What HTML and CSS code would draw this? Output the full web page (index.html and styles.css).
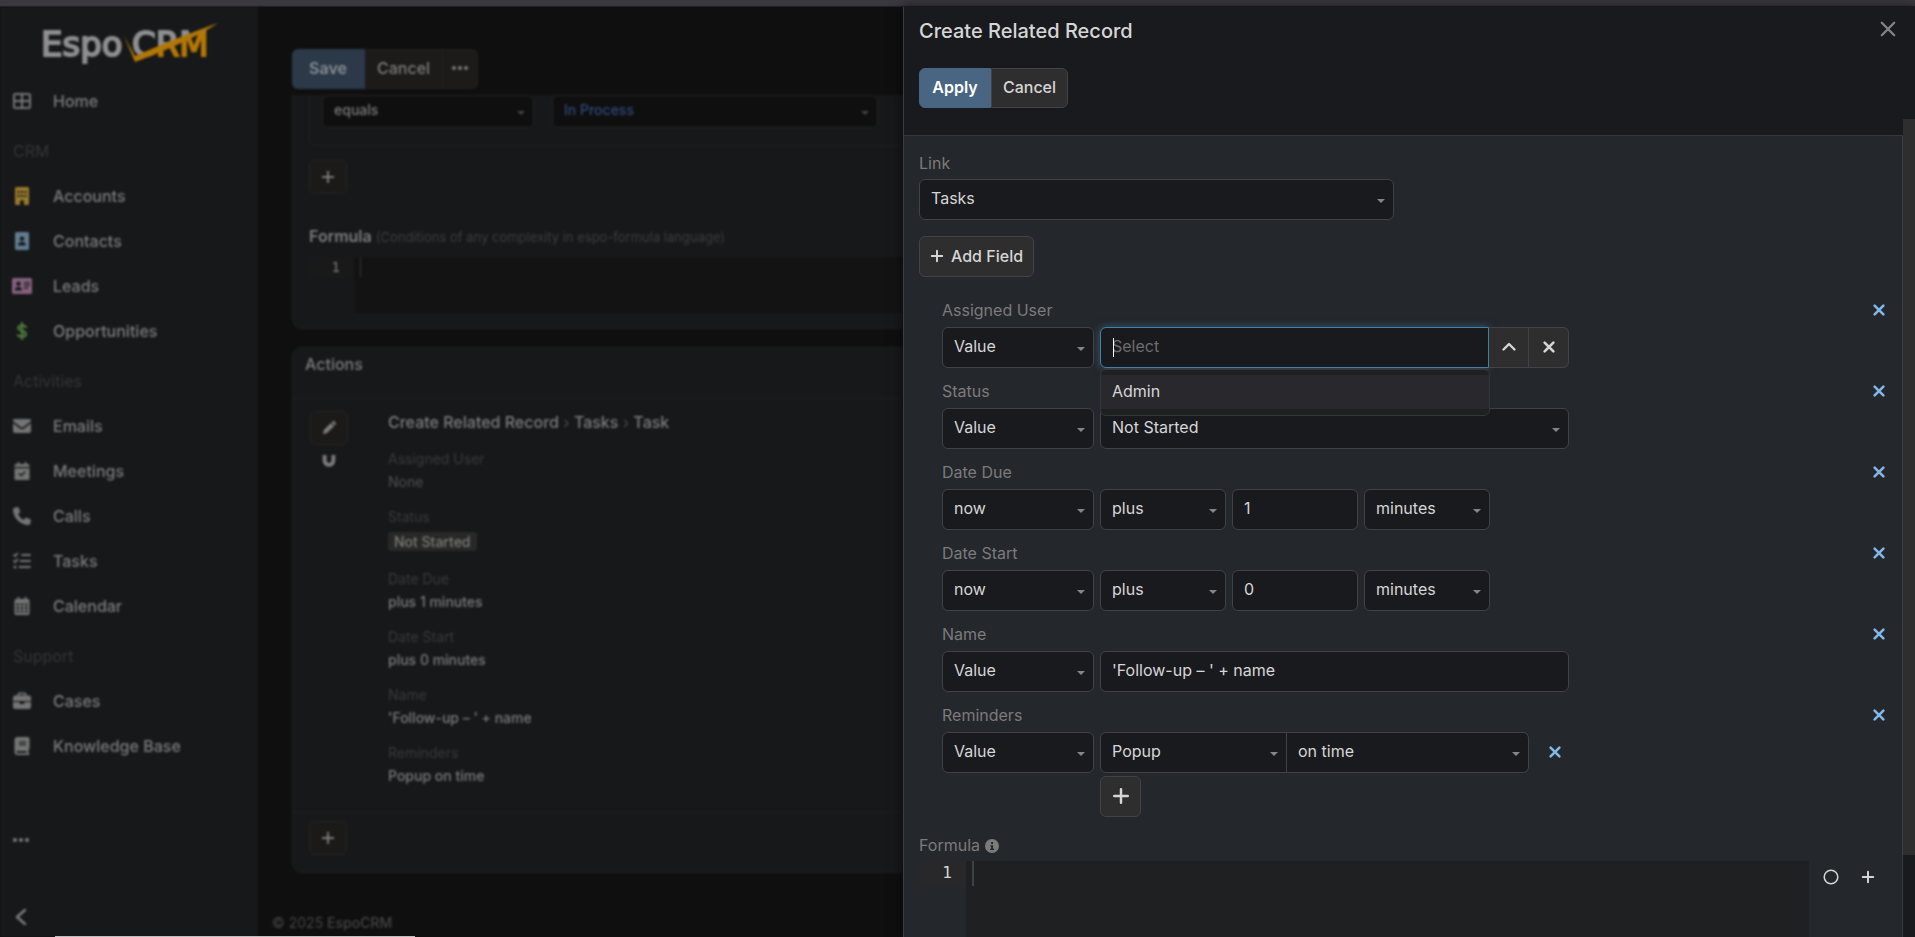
FILE: index.html
```html
<!DOCTYPE html>
<html lang="en">
<head>
<meta charset="utf-8">
<title>EspoCRM</title>
<link rel="stylesheet" href="styles.css">
</head>
<body>
<svg class="sprite" aria-hidden="true">
  <symbol id="plus" viewBox="0 0 16 16"><path d="M8 2v12M2 8h12" fill="none" stroke="currentColor" stroke-width="2.2" stroke-linecap="round"/></symbol>
  <symbol id="close" viewBox="0 0 16 16"><path d="M2.500 2.500l11 11M13.500 2.500l-11 11" fill="none" stroke="currentColor" stroke-width="2" stroke-linecap="round"/></symbol>
  <symbol id="times" viewBox="0 0 16 16"><path d="M3 3l10 10M13 3L3 13" fill="none" stroke="currentColor" stroke-width="3" stroke-linecap="round"/></symbol>
  <symbol id="up" viewBox="0 0 16 16"><path d="M2.500 10.500L8 5l5.500 5.500" fill="none" stroke="currentColor" stroke-width="2.4" stroke-linecap="round" stroke-linejoin="round"/></symbol>
  <symbol id="dots" viewBox="0 0 16 16"><circle cx="2" cy="8" r="2"/><circle cx="8" cy="8" r="2"/><circle cx="14" cy="8" r="2"/></symbol>
  <symbol id="home" viewBox="0 0 18 18"><path d="M2.5 2h13A1.5 1.5 0 0 1 17 3.500v11a1.500 1.500 0 0 1-1.500 1.500h-13A1.500 1.500 0 0 1 1 14.500v-11A1.500 1.500 0 0 1 2.500 2zM9 2v14M1 9h16" fill="none" stroke="currentColor" stroke-width="2"/></symbol>
  <symbol id="building" viewBox="0 0 18 18"><path fill-rule="evenodd" d="M3.500 0h11A1.500 1.500 0 0 1 16 1.500v15a1.500 1.500 0 0 1-1.500 1.500H11v-3a2 2 0 0 0-4 0v3H3.500A1.500 1.500 0 0 1 2 16.500v-15A1.500 1.500 0 0 1 3.500 0zM4.500 4v2h2V4zM8 4v2h2V4zM11.500 4v2h2V4zM4.500 8v2h2V8zM8 8v2h2V8zM11.500 8v2h2V8z"/></symbol>
  <symbol id="contact" viewBox="0 0 18 18"><path fill-rule="evenodd" d="M3.500 0h11A1.500 1.500 0 0 1 16 1.500v15a1.500 1.500 0 0 1-1.500 1.500h-11A1.500 1.500 0 0 1 2 16.500v-15A1.500 1.500 0 0 1 3.500 0zM9 4.500a2.200 2.200 0 1 0 0 4.400 2.200 2.200 0 0 0 0-4.400zM5 13.500h8c0-2-1.500-3.500-3-3.500H8c-1.500 0-3 1.500-3 3.500z"/></symbol>
  <symbol id="lead" viewBox="0 0 20 18"><path fill-rule="evenodd" d="M1.500 1h17A1.500 1.500 0 0 1 20 2.500v13a1.500 1.500 0 0 1-1.500 1.500h-17A1.500 1.500 0 0 1 0 15.500v-13A1.500 1.500 0 0 1 1.500 1zM6.500 4.500a2.200 2.200 0 1 0 0 4.400 2.200 2.200 0 0 0 0-4.400zM3 13.500h7c0-2-1-3.500-2.500-3.500h-2C4 10 3 11.500 3 13.500zM12 5v1.200h6V5zM12 7.800V9h6V7.800zM12 10.600v1.200h4v-1.200z"/></symbol>
  <symbol id="dollar" viewBox="0 0 18 18"><path d="M9 1v16M13 5C12 3.700 6 2.500 5.300 5.700 4.700 9.500 13 8 13 12c0 3.500-6 3-8.200 1.300" fill="none" stroke="currentColor" stroke-width="2.200" stroke-linecap="round"/></symbol>
  <symbol id="mail" viewBox="0 0 18 18"><path d="M1.500 2h15A1.500 1.500 0 0 1 17.400 4.700L9.900 10.300a1.500 1.500 0 0 1-1.800 0L.6 4.700A1.500 1.500 0 0 1 1.500 2zM0 6.200l7.300 5.500a3 3 0 0 0 3.400 0L18 6.200V14a2 2 0 0 1-2 2H2a2 2 0 0 1-2-2z"/></symbol>
  <symbol id="meeting" viewBox="0 0 18 18"><path d="M4.500 0h2v2h5V0h2v2H15a1.500 1.500 0 0 1 1.500 1.500V5h-15V3.500A1.500 1.500 0 0 1 3 2h1.500zM1.500 6.200h15v10A1.500 1.500 0 0 1 15 18H3a1.500 1.500 0 0 1-1.500-1.800z"/><path d="M6 11.500l2.200 2.200 4-4" fill="none" stroke="#17181a" stroke-width="1.500"/></symbol>
  <symbol id="call" viewBox="0 0 18 18"><path d="M5.800.9A1.400 1.400 0 0 0 4.100.1L1 .9A1.400 1.400 0 0 0 0 2.300C0 11 7 18 15.700 18c.6 0 1.200-.4 1.400-1l.8-3.100a1.400 1.400 0 0 0-.8-1.700l-3.400-1.400c-.6-.2-1.200-.1-1.600.4l-1.400 1.700A11.900 11.900 0 0 1 5 7.200l1.700-1.400c.5-.4.6-1 .4-1.600z"/></symbol>
  <symbol id="tasks" viewBox="0 0 18 18"><path d="M9 3h8M7.500 9H17M6.500 15H17M1 3l1.200 1.200L4.500 1.500M1 9l1.200 1.200L4.500 7.500" fill="none" stroke="currentColor" stroke-width="1.800" stroke-linecap="round"/><circle cx="2" cy="15" r="1.600"/></symbol>
  <symbol id="calendar" viewBox="0 0 18 18"><path fill-rule="evenodd" d="M4.500 0h2v2h5V0h2v2H15a1.500 1.500 0 0 1 1.500 1.500v13A1.500 1.500 0 0 1 15 18H3a1.500 1.500 0 0 1-1.500-1.500v-13A1.500 1.500 0 0 1 3 2h1.500zM3.500 6.500v2h2.500v-2zM7.700 6.500v2h2.600v-2zM12 6.500v2h2.500v-2zM3.500 10v2h2.500v-2zM7.700 10v2h2.600v-2zM12 10v2h2.500v-2zM3.500 13.500v2h2.500v-2zM7.700 13.500v2h2.600v-2zM12 13.500v2h2.500v-2z"/></symbol>
  <symbol id="case" viewBox="0 0 18 18"><path fill-rule="evenodd" d="M6 .5h6A1.500 1.500 0 0 1 13.500 2v1.500H16a2 2 0 0 1 2 2V9H0V5.500a2 2 0 0 1 2-2h2.500V2A1.500 1.500 0 0 1 6 .5zM6.200 2.200v1.300h5.600V2.200zM0 10h6.500v1a1 1 0 0 0 1 1h3a1 1 0 0 0 1-1v-1H18v5a2 2 0 0 1-2 2H2a2 2 0 0 1-2-2z"/></symbol>
  <symbol id="book" viewBox="0 0 18 18"><path fill-rule="evenodd" d="M4.500 0H15a1.500 1.500 0 0 1 1.500 1.500v10.200c0 .6-.4 1.100-1 1.300V16a1 1 0 0 1 0 2h-11a3 3 0 0 1-3-3V3a3 3 0 0 1 3-3zM6 4.500v1.200h7V4.500zM6 7v1.200h7V7zM4.500 14a1 1 0 0 0 0 2h9v-2z"/></symbol>
  <symbol id="pencil" viewBox="0 0 16 16"><path d="M10.200 2.200l3.600 3.600-8 8L1 15l1.200-4.800zM11 1.400l1-1c.6-.6 1.500-.6 2 0L15.600 2c.6.600.6 1.500 0 2l-1 1z"/></symbol>
  <symbol id="magnet" viewBox="0 0 16 16"><path d="M3 1v6.500a5 5 0 0 0 10 0V1" fill="none" stroke="currentColor" stroke-width="4.400"/></symbol>
  <symbol id="back" viewBox="0 0 16 16"><path d="M12 1L4 8l8 7" fill="none" stroke="currentColor" stroke-width="2.400" stroke-linecap="round" stroke-linejoin="round"/></symbol>
  <symbol id="info" viewBox="0 0 16 16"><path fill-rule="evenodd" d="M8 0a8 8 0 1 1 0 16A8 8 0 0 1 8 0zM7 3.500v2.200h2.200V3.500zM6 7v1.500h1V11H5.800v1.500h4.600V11H9.200V7z"/></symbol>
  <symbol id="circle" viewBox="0 0 16 16"><circle cx="8" cy="8" r="6.800" fill="none" stroke="currentColor" stroke-width="1.500"/></symbol>
</svg>

<div class="strip"></div>
<div class="app">
  <nav class="sidebar">
    <a class="logo" href="#" aria-label="EspoCRM">
      <svg viewBox="0 0 180 44" width="180" height="44">
        <defs><linearGradient id="half" gradientUnits="userSpaceOnUse" x1="119" y1="-16" x2="146" y2="60"><stop offset=".5" stop-color="#8f8f8f"/><stop offset=".5" stop-color="#b27706"/></linearGradient></defs>
        <text class="logo-text" x="0" y="35" fill="#8f8f8f" stroke="#8f8f8f">Espo</text>
        <text class="logo-text" x="91" y="35" fill="url(#half)" stroke="url(#half)">CRM</text>
        <path d="M83 15l11 20Q140 15 177 2 150 20 94 41z" fill="#b27706"/>
      </svg>
    </a>
    <ul class="menu">
      <li><a href="#"><svg class="ic"><use href="#home"/></svg>Home</a></li>
      <li class="group">CRM</li>
      <li><a href="#"><svg class="ic gold"><use href="#building"/></svg>Accounts</a></li>
      <li><a href="#"><svg class="ic blue"><use href="#contact"/></svg>Contacts</a></li>
      <li><a href="#"><svg class="ic pink"><use href="#lead"/></svg>Leads</a></li>
      <li><a href="#"><svg class="ic green"><use href="#dollar"/></svg>Opportunities</a></li>
      <li class="group">Activities</li>
      <li><a href="#"><svg class="ic"><use href="#mail"/></svg>Emails</a></li>
      <li><a href="#"><svg class="ic"><use href="#meeting"/></svg>Meetings</a></li>
      <li><a href="#"><svg class="ic"><use href="#call"/></svg>Calls</a></li>
      <li><a href="#"><svg class="ic"><use href="#tasks"/></svg>Tasks</a></li>
      <li><a href="#"><svg class="ic"><use href="#calendar"/></svg>Calendar</a></li>
      <li class="group">Support</li>
      <li><a href="#"><svg class="ic"><use href="#case"/></svg>Cases</a></li>
      <li><a href="#"><svg class="ic"><use href="#book"/></svg>Knowledge Base</a></li>
    </ul>
    <button class="bare more" aria-label="More"><svg class="i16"><use href="#dots"/></svg></button>
    <button class="bare fold" aria-label="Collapse"><svg class="i16"><use href="#back"/></svg></button>
  </nav>
  <main class="main">
    <div class="toolbar">
      <button class="save">Save</button><button>Cancel</button><button class="tight" aria-label="Menu"><svg class="i16"><use href="#dots"/></svg></button>
    </div>
    <section class="panel conditions">
      <div class="cond-box">
        <span class="pick small operator"><select aria-label="Operator"><option>equals</option></select></span>
        <span class="pick small state"><select aria-label="Status value"><option>In Process</option></select></span>
      </div>
      <button class="sq" aria-label="Add condition"><svg class="i14"><use href="#plus"/></svg></button>
      <div class="formula-head"><label for="cond">Formula</label> <small>(Conditions of any complexity in espo-formula language)</small></div>
      <div class="code dim">
        <div class="gutter"><span>1</span></div><span class="cursor"></span><textarea id="cond" spellcheck="false"></textarea>
      </div>
    </section>
    <section class="panel actions">
      <h2>Actions</h2>
      <div class="action">
        <div class="tools">
          <button class="sq" aria-label="Edit"><svg class="i14"><use href="#pencil"/></svg></button>
          <svg class="i14"><use href="#magnet"/></svg>
        </div>
        <div class="detail">
          <h3>Create Related Record <i>›</i> Tasks <i>›</i> Task</h3>
          <dl>
            <dt>Assigned User</dt><dd class="none">None</dd>
            <dt>Status</dt><dd class="tagged"><span class="tag">Not Started</span></dd>
            <dt>Date Due</dt><dd>plus 1 minutes</dd>
            <dt>Date Start</dt><dd>plus 0 minutes</dd>
            <dt>Name</dt><dd>'Follow-up – ' + name</dd>
            <dt>Reminders</dt><dd>Popup on time</dd>
          </dl>
        </div>
      </div>
      <div class="foot"><button class="sq" aria-label="Add action"><svg class="i14"><use href="#plus"/></svg></button></div>
    </section>
    <footer>© 2025 <a href="#">EspoCRM</a></footer>
  </main>
</div>

<aside class="drawer" role="dialog" aria-labelledby="dlg">
  <header>
    <div class="title"><h1 id="dlg">Create Related Record</h1><button class="bare close" aria-label="Close"><svg class="i18"><use href="#close"/></svg></button></div>
    <div class="buttons"><button class="primary">Apply</button><button>Cancel</button></div>
  </header>
  <div class="body">
    <div class="link">
      <label for="link">Link</label>
      <span class="pick"><select id="link"><option>Tasks</option></select></span>
    </div>
    <button class="btn add"><svg class="i14"><use href="#plus"/></svg>Add Field</button>
    <div class="fields">
      <div class="field">
        <div class="head"><label for="user">Assigned User</label><button class="bare rm" aria-label="Remove Assigned User"><svg class="i14"><use href="#times"/></svg></button></div>
        <div class="row">
          <span class="pick"><select aria-label="Assigned User type"><option>Value</option></select></span>
          <div class="lookup">
            <input id="user" class="focus" type="text" placeholder="Select">
            <span class="caret"></span>
            <button aria-label="Open"><svg class="i16"><use href="#up"/></svg></button><button aria-label="Clear"><svg class="i14"><use href="#times"/></svg></button>
            <ul class="suggest"><li><a href="#">Admin</a></li></ul>
          </div>
        </div>
      </div>
      <div class="field">
        <div class="head"><label for="status">Status</label><button class="bare rm" aria-label="Remove Status"><svg class="i14"><use href="#times"/></svg></button></div>
        <div class="row">
          <span class="pick"><select aria-label="Status type"><option>Value</option></select></span>
          <span class="pick"><select id="status"><option>Not Started</option></select></span>
        </div>
      </div>
      <div class="field">
        <div class="head"><label for="due">Date Due</label><button class="bare rm" aria-label="Remove Date Due"><svg class="i14"><use href="#times"/></svg></button></div>
        <div class="row">
          <span class="pick"><select id="due"><option>now</option></select></span>
          <div class="shift">
            <span class="pick"><select aria-label="Due operator"><option>plus</option></select></span>
            <input type="text" value="1" aria-label="Due amount">
            <span class="pick"><select aria-label="Due unit"><option>minutes</option></select></span>
          </div>
        </div>
      </div>
      <div class="field">
        <div class="head"><label for="start">Date Start</label><button class="bare rm" aria-label="Remove Date Start"><svg class="i14"><use href="#times"/></svg></button></div>
        <div class="row">
          <span class="pick"><select id="start"><option>now</option></select></span>
          <div class="shift">
            <span class="pick"><select aria-label="Start operator"><option>plus</option></select></span>
            <input type="text" value="0" aria-label="Start amount">
            <span class="pick"><select aria-label="Start unit"><option>minutes</option></select></span>
          </div>
        </div>
      </div>
      <div class="field">
        <div class="head"><label for="name">Name</label><button class="bare rm" aria-label="Remove Name"><svg class="i14"><use href="#times"/></svg></button></div>
        <div class="row">
          <span class="pick"><select aria-label="Name type"><option>Value</option></select></span>
          <input id="name" type="text" value="'Follow-up – ' + name">
        </div>
      </div>
      <div class="field">
        <div class="head"><label for="rem">Reminders</label><button class="bare rm" aria-label="Remove Reminders"><svg class="i14"><use href="#times"/></svg></button></div>
        <div class="row">
          <span class="pick"><select aria-label="Reminders type"><option>Value</option></select></span>
          <div>
            <div class="reminder">
              <span class="pick first"><select id="rem"><option>Popup</option></select></span><span class="pick second"><select aria-label="Reminder time"><option>on time</option></select></span>
              <button class="bare rm" aria-label="Remove reminder"><svg class="i14"><use href="#times"/></svg></button>
            </div>
            <button class="btn square" aria-label="Add reminder"><svg class="i18"><use href="#plus"/></svg></button>
          </div>
        </div>
      </div>
    </div>
    <div class="formula">
      <label for="formula">Formula <svg class="i14"><use href="#info"/></svg></label>
      <div class="editor">
        <div class="code">
          <div class="gutter"><span>1</span></div><span class="cursor"></span><textarea id="formula" spellcheck="false"></textarea>
        </div>
        <button class="bare" aria-label="Check syntax"><svg class="i16"><use href="#circle"/></svg></button>
        <button class="bare" aria-label="Insert"><svg class="i14"><use href="#plus"/></svg></button>
      </div>
    </div>
  </div>
  <div class="scroll"><div class="thumb"></div></div>
</aside>
<div class="edge"></div>
</body>
</html>
```
FILE: styles.css
```css
* { box-sizing: border-box; }
html, body { height: 100%; }
body {
  margin: 0;
  display: flex;
  flex-direction: column;
  overflow: hidden;
  background: #0f0f0f;
  color: #d6d6d6;
  font: 16px/24px Inter, "Liberation Sans", sans-serif;
}
button, input, select, textarea { font: inherit; color: inherit; margin: 0; }
button { padding: 0; cursor: pointer; }
a { color: inherit; text-decoration: none; }
ul, dl, dd, h1, h2, h3 { margin: 0; padding: 0; list-style: none; }
svg { fill: currentColor; flex: none; }
.sprite { position: absolute; width: 0; height: 0; }
.bare { border: 0; background: none; display: flex; align-items: center; justify-content: center; }
.i14 { width: 14px; height: 14px; }
.i16 { width: 16px; height: 16px; }
.i18 { width: 18px; height: 18px; }

.strip { height: 7px; flex: none; background: #3b393f; border-bottom: 1px solid #2b2c30; }
.app { flex: 1; min-height: 0; display: flex; filter: blur(1px); color: #7c7c7c; font-weight: 500; }

/* Sidebar */
.sidebar { width: 257px; flex: none; display: flex; flex-direction: column; background: #17181a; border-right: 1px solid #1a1b1c; }
.logo { padding: 14px 0 0 41px; height: 71px; }
.logo svg { display: block; }
.logo-text { font: 34px "DejaVu Sans", sans-serif; stroke-width: 2; }
.menu li { height: 45px; display: flex; align-items: center; }
.menu li.group { margin-top: 5px; padding-left: 13px; color: #353535; font-weight: 400; }
.menu a { display: flex; align-items: center; gap: 21px; padding-left: 12px; }
.ic { width: 20px; height: 18px; color: #747474; }
.gold { color: #97792c; }
.blue { color: #607b90; }
.pink { color: #84607e; }
.green { color: #4e7a3c; }
.more { margin: 60px 0 0 13px; width: 16px; height: 24px; }
.fold { margin: 53px 0 0 13px; width: 16px; height: 24px; }

/* Page behind the dialog */
.main { flex: 1; min-width: 0; padding: 0 15px 0 35px; overflow: hidden; background: #0f0f0f; }
.toolbar { display: flex; height: 88px; padding: 42px 0 6px; }
.toolbar button { border: 1px solid #20201f; border-left: 0; background: #1c1b19; padding: 0 12px 2px; font-weight: 500; }
.toolbar .save { width: 73px; background: #2b3949; border-color: #2b3949; border-radius: 6px 0 0 6px; color: #8b8f93; font-weight: 600; }
.toolbar .tight { padding: 0 9px 2px; border-radius: 0 6px 6px 0; display: flex; align-items: center; }
.panel { background: #17181a; border: 1px solid #1e1f20; border-radius: 10px; }
.conditions { border-top: 0; border-radius: 0 0 10px 10px; padding: 0 16px 16px; height: 234px; }
.cond-box { display: flex; gap: 18px; height: 51px; padding-left: 12px; margin-bottom: 14px; border: 1px solid #202122; border-top: 0; border-radius: 0 0 6px 6px; }
.small.pick { height: 33px; }
.small select { background: #0f0f0f; border-color: #232323; font-size: 14px; }
.small.pick::after { border-top-color: #454545; }
.operator { width: 212px; }
.state { width: 326px; color: #30497c; }
.sq { width: 38px; height: 34px; display: flex; align-items: center; justify-content: center; background: #1b1a18; border: 1px solid #252523; border-radius: 6px; }
.formula-head { margin-top: 30px; height: 33px; font-weight: 600; }
.formula-head label { color: #7c7c7c; }
small { font-size: 13px; font-weight: 400; color: #3d3d3d; }
.panel h2 { height: 51px; padding: 4px 12px; font-size: 16px; font-weight: 500; border-bottom: 1px solid #1e1f20; }
.actions { margin-top: 18px; }
.action { display: flex; padding: 12px 17px 13px; }
.tools { width: 78px; flex: none; display: flex; flex-direction: column; gap: 9px; }
.tools > svg { margin-left: 12px; }
h3 { font-size: 16px; line-height: 22px; font-weight: 500; }
h3 i { font-style: normal; color: #444; }
.detail dl { font-size: 14px; margin-top: 14px; }
dt { color: #3a3a3a; font-weight: 400; line-height: 24px; }
dd { line-height: 22px; margin-bottom: 12px; }
dd.none { color: #505050; font-weight: 400; }
dd.tagged { line-height: 26px; }
.tag { padding: 1px 6px; background: #282827; border-radius: 3px; }
.foot { border-top: 1px solid #1e1f20; height: 60px; padding: 8px 16px; }
footer { margin: 38px 0 0 -20px; font-size: 14px; font-weight: 400; color: #444; }
footer a { font-weight: 500; }

/* Code editor */
.code { display: flex; flex: 1; background: #1f2021; font-family: "DejaVu Sans Mono", monospace; }
.gutter { width: 47px; flex: none; background: #24272c; }
.gutter span { display: block; height: 25px; padding-right: 14px; text-align: right; background: #28282b; }
.cursor { width: 2px; height: 25px; margin-left: 6px; background: #404144; }
.code textarea { flex: 1; min-width: 0; border: 0; outline: 0; resize: none; background: none; padding: 0 4px; }
.code.dim { background: #131313; height: 56px; font-size: 14px; font-weight: 400; }
.dim .gutter { width: 45px; background: #16181a; }
.dim .gutter span { height: 21px; line-height: 21px; background: #191919; }
.dim .cursor { height: 20px; width: 1px; background: #333; }

/* Dialog */
.drawer {
  position: absolute;
  top: 7px;
  right: 0;
  bottom: 0;
  left: 903px;
  display: grid;
  grid-template: auto 1fr / 1fr 12px;
  background: #191a1e;
  border-left: 1px solid #3c3d41;
  box-shadow: 0 0 12px rgba(0, 0, 0, .6);
}
.drawer header { height: 129px; padding: 8px 0 0 15px; border-bottom: 1px solid #36373b; }
.title { display: flex; justify-content: space-between; height: 53px; }
.title h1 { font-size: 20px; line-height: 32px; font-weight: 500; }
.close { width: 30px; height: 28px; color: #858585; }
.buttons { display: flex; }
.buttons button { height: 40px; width: 77px; padding-bottom: 2px; background: #2e2e2e; border: 1px solid #434347; border-radius: 0 6px 6px 0; font-weight: 500; }
.buttons .primary { width: 72px; background: #486581; border-color: #486581; border-radius: 6px 0 0 6px; color: #fff; font-weight: 600; }
.scroll { grid-area: 1 / 2 / 3 / 3; padding-top: 112px; }
.thumb { height: 737px; max-height: 90%; background: #2e2e2e; }
.body { min-height: 0; overflow: hidden; padding: 15px 16px 0 15px; background: #24272c; border-right: 1px solid #3c3d41; }
label { color: #7b7b7b; }
.link { width: 475px; }
.link label { display: block; height: 28px; }
.pick { display: block; position: relative; height: 41px; min-width: 0; }
.pick::after { content: ""; position: absolute; right: 9px; top: calc(50% - 1px); border: 4px solid transparent; border-top-color: #858585; border-bottom: 0; pointer-events: none; }
select, input { appearance: none; width: 100%; height: 100%; padding: 0 11px 3px; border: 1px solid #414246; border-radius: 6px; outline: 0; background: #191a1e; }
.btn { display: flex; align-items: center; justify-content: center; gap: 7px; height: 41px; padding: 0 0 2px; background: #2e2e2e; border: 1px solid #434347; border-radius: 6px; font-weight: 500; }
.add { margin-top: 16px; padding: 0 10px 2px; }
.fields { padding: 20px 0 0 23px; }
.field { height: 81px; }
.field:last-child { height: auto; }
.head { display: flex; justify-content: space-between; height: 30px; padding-top: 1px; }
.rm { width: 14px; height: 24px; color: #82b7e8; }
.row { display: grid; grid-template-columns: 152fr 469fr 311fr; gap: 6px; }
.row input { height: 41px; }
.shift { display: grid; grid-template-columns: 126fr 126fr 126fr 73fr; gap: 6px; }
.lookup { position: relative; display: flex; }
.lookup input { flex: 1; min-width: 0; border-radius: 6px 0 0 6px; }
.lookup input.focus { border-color: #447fa5; box-shadow: 0 0 8px rgba(68, 127, 165, .6); }
.lookup input::placeholder { color: #6d6d6d; opacity: 1; }
.lookup button { width: 40px; padding-bottom: 2px; display: flex; align-items: center; justify-content: center; background: #2e2e2e; border: 1px solid #434347; border-left: 0; }
.lookup button:last-of-type { border-radius: 0 6px 6px 0; }
.caret { position: absolute; left: 13px; top: 11px; width: 1px; height: 19px; background: #fff; }
.suggest { position: absolute; z-index: 2; top: 42px; left: 0; right: 79px; padding: 5px 0 6px; background: #1f2021; border: 1px solid #35363a; border-radius: 6px; }
.suggest a { display: block; padding: 4px 11px 6px; background: #28282d; }
.reminder { display: flex; }
.first { flex: 187; }
.second { flex: 242; }
.first select { border-radius: 6px 0 0 6px; }
.second select { border-left: 0; border-radius: 0 6px 6px 0; }
.reminder .rm { width: 28px; height: 39px; margin-left: 12px; }
.square { width: 41px; margin-top: 3px; }
.formula { margin-top: 16px; }
.formula label { display: block; height: 28px; }
.formula label svg { vertical-align: -2px; }
.editor { display: flex; }
.editor .code { height: 120px; margin-right: 3px; }
.editor .bare { width: 37px; height: 32px; }

.edge { position: absolute; left: 55px; bottom: 0; width: 360px; height: 1px; background: #bdbdbd; }
```
